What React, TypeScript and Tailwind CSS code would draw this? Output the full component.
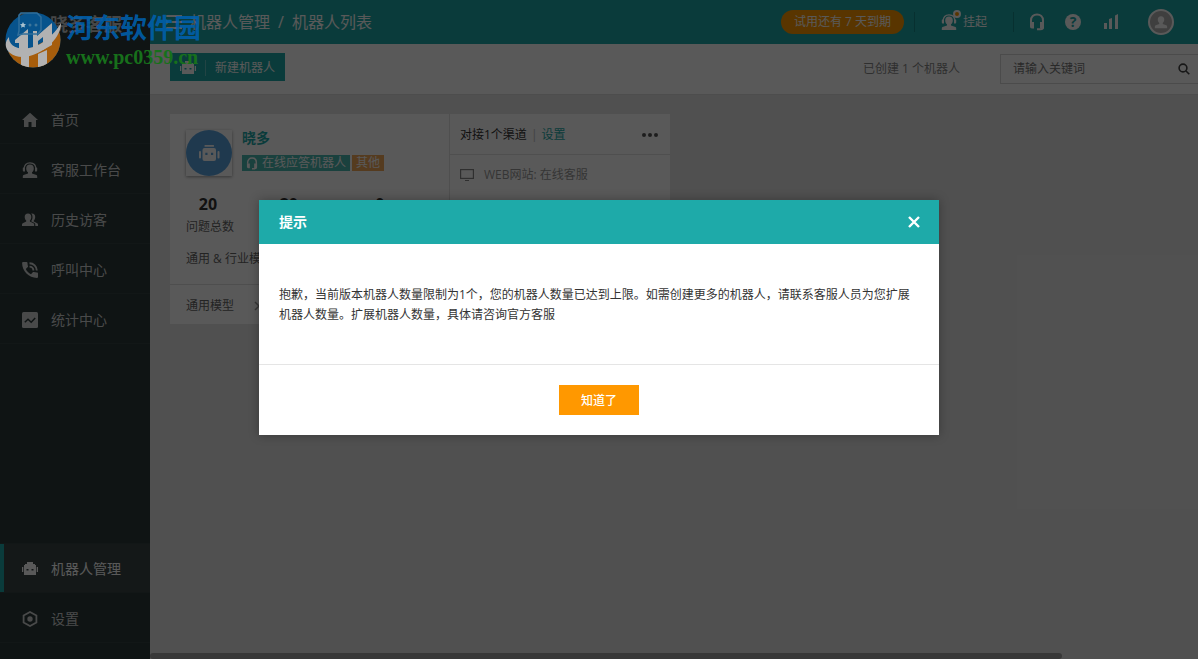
import { useState } from "react";
import type { ReactNode } from "react";

type IconProps = {
  className?: string;
};

type NavItemProps = {
  icon: ReactNode;
  label: string;
  active?: boolean;
};

const RobotIcon = ({ className }: IconProps) => (
  <svg viewBox="0 0 16 16" fill="currentColor" className={className} aria-hidden="true">
    <path fillRule="evenodd" d="M5 1h6v2h2v1h1v10H2V4h1V3h2V1Zm-.5 7v1.600h2V8h-2Zm5 0v1.600h2V8h-2Z" />
    <rect x="0" y="6" width="1.300" height="5" />
    <rect x="14.700" y="6" width="1.300" height="5" />
  </svg>
);

const RobotFace = ({ className }: IconProps) => (
  <svg viewBox="0 0 22 18" fill="currentColor" className={className} aria-hidden="true">
    <rect x="6.500" y="1" width="9.500" height="1.800" rx=".6" />
    <path fillRule="evenodd" d="M6.500 4h9.500a2 2 0 0 1 2 2v9a2 2 0 0 1-2 2H6.500a2 2 0 0 1-2-2V6a2 2 0 0 1 2-2Zm.8 4.800v2.200h2.200V8.800H7.300Zm5.700 0v2.200h2.200V8.800H13Z" />
    <rect x="1" y="7" width="2" height="7.500" rx="1" />
    <rect x="19.500" y="7" width="2" height="7.500" rx="1" />
  </svg>
);

const HomeIcon = ({ className }: IconProps) => (
  <svg viewBox="0 0 16 16" fill="currentColor" className={className} aria-hidden="true">
    <path d="M8 .8 16 8h-2v7H9.500v-5h-3v5H2V8H0L8 .8Z" />
  </svg>
);

const AgentIcon = ({ className }: IconProps) => (
  <svg viewBox="0 0 16 16" className={className} aria-hidden="true">
    <path d="M2 7.500C2 3 4.500.8 8 .8s6 2.200 6 6.700" fill="none" stroke="currentColor" strokeWidth="1.300" />
    <path
      fill="currentColor"
      d="M8 2.600c2.500 0 3.800 1.600 3.800 3.800 0 1.700-.7 3-1.800 3.900v1.100l4.500 1.700c.5.300.7.700.7 1.300V16H.8v-1.600c0-.6.2-1 .7-1.300L6 11.400v-1.100c-1.100-.9-1.800-2.200-1.800-3.900C4.200 4.200 5.500 2.600 8 2.600ZM1.200 5.500H3v4H2c-.8 0-1.200-.5-1.200-1.300V6l.4-.5Zm13.600 0H13v4h1c.8 0 1.200-.5 1.200-1.300V6l-.4-.5Z"
    />
  </svg>
);

const VisitorsIcon = ({ className }: IconProps) => (
  <svg viewBox="0 0 16 16" fill="currentColor" className={className} aria-hidden="true">
    <path d="M6 1.500c2.200 0 3.300 1.500 3.300 3.500 0 1.600-.6 2.800-1.400 3.600v1l3.500 1.700c.6.300.8.800.8 1.300V14H0v-1.400c0-.5.200-1 .8-1.300l3.400-1.700v-1C3.300 7.800 2.700 6.600 2.700 5c0-2 1.100-3.500 3.300-3.500Z" />
    <path d="M9.200 1.600c2.600-.4 4 1.200 4 3.400 0 1.600-.6 2.800-1.400 3.600v1l3.400 1.700c.5.300.8.800.8 1.300V14h-2.700v-1.400c0-.8-.4-1.500-1.200-1.900L9.400 9.400v-.6c.6-.9 1.100-2.200 1.100-3.800 0-1.400-.4-2.600-1.300-3.400Z" />
  </svg>
);

const CallIcon = ({ className }: IconProps) => (
  <svg viewBox="0 0 16 16" className={className} aria-hidden="true">
    <path
      fill="currentColor"
      d="M3.800 7C5 9.400 6.600 11 9 12.200l1.800-1.900c.3-.3.600-.4 1-.2 1 .3 2 .5 3.200.5.600 0 1 .4 1 1V15c0 .5-.4.900-1 .9C6.800 15.900.1 9.200.1 1c0-.5.400-.9.900-.9h3.600c.6 0 .9.400.9.900 0 1.100.200 2.200.5 3.200.1.300 0 .7-.2.900L3.800 7Z"
    />
    <path d="M7.500 1.200c4 0 7.300 3.300 7.300 7.300M7.500 4.600c2.200 0 3.900 1.700 3.900 3.900" fill="none" stroke="currentColor" strokeWidth="1.900" />
  </svg>
);

const StatsIcon = ({ className }: IconProps) => (
  <svg viewBox="0 0 16 16" className={className} aria-hidden="true">
    <rect width="16" height="16" rx="1.500" fill="currentColor" />
    <path d="m2.800 10.200 3.200-3 3.200 3 4-4.200" fill="none" stroke="#2b3939" strokeWidth="1.500" />
  </svg>
);

const HexIcon = ({ className }: IconProps) => (
  <svg viewBox="0 0 16 16" className={className} aria-hidden="true">
    <path d="M8 1 14.400 4.500v7L8 15l-6.400-3.500v-7L8 1Z" fill="none" stroke="currentColor" strokeWidth="1.800" />
    <circle cx="8" cy="8" r="2.700" fill="currentColor" />
  </svg>
);

const HeadsetIcon = ({ className }: IconProps) => (
  <svg viewBox="0 0 16 18" className={className} aria-hidden="true">
    <path d="M2 9.500V7.500c0-3.800 2.600-6 6-6s6 2.200 6 6V14c0 1.700-1 2.300-2.500 2.300H8" fill="none" stroke="currentColor" strokeWidth="2" />
    <path d="M1 9h4v6.500H3c-1.300 0-2-.8-2-2V9Zm10 0h4v6.500h-4V9Z" fill="currentColor" />
  </svg>
);

const PersonIcon = ({ className }: IconProps) => (
  <svg viewBox="0 0 16 16" fill="currentColor" className={className} aria-hidden="true">
    <path d="M8 1.500c2.500 0 3.700 1.500 3.700 3.700 0 1.700-.7 3-1.700 3.900v1.200l4 1.500c.7.300 1 .7 1 1.400V15H1v-1.800c0-.7.300-1.100 1-1.400l4-1.500V9.100c-1-.9-1.700-2.200-1.700-3.900C4.300 3 5.500 1.500 8 1.500Z" />
  </svg>
);

const NavItem = ({ icon, label, active }: NavItemProps) => (
  <li className="border-b border-[#354343]">
    <a
      href="#"
      className={
        active
          ? "flex h-12 items-center gap-[13px] border-l-4 border-[#1eaaa9] bg-[#3a4646] pt-[2px] pl-[18px] text-sm text-white"
          : "flex h-12 items-center gap-[13px] pt-[2px] pl-[22px] text-sm text-[#d0d3d3]"
      }
    >
      {icon}
      <span>{label}</span>
    </a>
  </li>
);

const Sidebar = () => (
  <aside className="flex w-[150px] shrink-0 flex-col bg-[#2b3939]">
    <div className="flex h-[95px] items-start gap-2 border-b border-[#354343] pt-3 pl-[15px] text-[#c8cccc]">
      <svg viewBox="0 0 27 24" className="h-6 w-[27px]" fill="none" stroke="currentColor" strokeWidth="1.500" aria-hidden="true">
        <path d="M6 2h15l4 4v13l-3 3H7l-4 1 1-4V4l2-2Z" />
        <circle cx="8" cy="12" r="1.500" fill="currentColor" />
        <circle cx="14" cy="12" r="1" fill="currentColor" />
        <circle cx="20" cy="12" r="1" fill="currentColor" />
      </svg>
      <strong className="text-lg leading-6">晓多客服</strong>
    </div>
    <nav className="flex flex-1 flex-col justify-between pb-4">
      <ul className="space-y-px">
        <NavItem icon={<HomeIcon className="size-4" />} label="首页" />
        <NavItem icon={<AgentIcon className="size-4" />} label="客服工作台" />
        <NavItem icon={<VisitorsIcon className="size-4" />} label="历史访客" />
        <NavItem icon={<CallIcon className="size-4" />} label="呼叫中心" />
        <NavItem icon={<StatsIcon className="size-4" />} label="统计中心" />
      </ul>
      <ul className="space-y-px border-t border-[#354343]">
        <NavItem icon={<RobotIcon className="size-4" />} label="机器人管理" active />
        <NavItem icon={<HexIcon className="size-4" />} label="设置" />
      </ul>
    </nav>
  </aside>
);

const Header = () => (
  <header className="flex h-11 shrink-0 items-center bg-[#1eaaa9] pr-6 pl-4 text-white">
    <button type="button" aria-label="菜单">
      <svg viewBox="0 0 16 14" className="h-[14px] w-4" fill="currentColor" aria-hidden="true">
        <path d="M0 0h16v2H0zM5 6h11v2H5zM0 12h16v2H0zM0 4l3 3-3 3z" />
      </svg>
    </button>
    <div className="ml-2 flex gap-2 text-base">
      <span>机器人管理</span>
      <span>/</span>
      <span>机器人列表</span>
    </div>
    <div className="ml-auto flex items-center">
      <span className="rounded-full bg-[#ff9800] px-[13px] text-xs leading-6">试用还有 7 天到期</span>
      <span className="ml-[10px] h-5 w-px bg-[#168b8a]" />
      <button type="button" className="ml-[26px] flex items-center gap-[6px] text-xs">
        <span className="relative">
          <AgentIcon className="size-4" />
          <span className="absolute -top-1 -right-1 size-2 rounded-full border-2 border-white bg-[#ff9800]" />
        </span>
        挂起
      </button>
      <span className="ml-[26px] h-5 w-px bg-[#168b8a]" />
      <button type="button" className="ml-[15px]" aria-label="客服">
        <HeadsetIcon className="h-[18px] w-4" />
      </button>
      <button type="button" className="ml-5 size-4 rounded-full bg-white text-center text-sm leading-4 font-bold text-[#1eaaa9]">
        ?
      </button>
      <button type="button" className="ml-[23px]" aria-label="统计">
        <svg viewBox="0 0 14 16" className="h-4 w-[14px]" fill="currentColor" aria-hidden="true">
          <path d="M0 9h3v6H0zM5 5l3-1v11H5zM11 1.500 14 0v15h-3z" />
        </svg>
      </button>
      <button
        type="button"
        className="ml-[30px] flex size-[26px] items-center justify-center rounded-full border-2 border-white bg-[#b5b5b5]"
        aria-label="账号"
      >
        <PersonIcon className="size-[14px]" />
      </button>
    </div>
  </header>
);

const Toolbar = () => (
  <div className="flex h-[51px] shrink-0 items-center border-b border-[#dcdcdc] bg-white pl-5 text-xs text-[#888]">
    <button type="button" className="mb-1 flex h-7 items-center bg-[#1eaaa9] px-[10px] pt-px text-white">
      <RobotIcon className="size-4" />
      <span className="mx-[9px] h-4 w-px bg-[#62c4c3]" />
      新建机器人
    </button>
    <span className="ml-auto">已创建 1 个机器人</span>
    <label className="ml-10 flex h-[30px] w-[198px] items-center border border-r-0 border-[#d8d8d8] pr-2 pl-3">
      <input
        type="text"
        placeholder="请输入关键词"
        aria-label="请输入关键词"
        className="min-w-0 flex-1 outline-none placeholder:text-[#777]"
      />
      <svg viewBox="0 0 12 12" className="size-3" fill="none" stroke="#444" strokeWidth="1.600" aria-hidden="true">
        <circle cx="5" cy="5" r="3.900" />
        <path d="m8 8 3.300 3.300" />
      </svg>
    </label>
  </div>
);

const RobotCard = () => (
  <article className="flex h-[210px] w-[500px] bg-white text-xs text-[#666]">
    <div className="flex w-[280px] flex-col border-r border-[#e3e3e3]">
      <div className="flex gap-[10px] px-4 pt-4">
        <div className="size-[46px] shadow-[0_1px_3px_rgba(0,0,0,0.4)]">
          <div className="flex size-full items-center justify-center rounded-full bg-[#5ba4e0] text-white">
            <RobotFace className="h-[18px] w-[22px]" />
          </div>
        </div>
        <div>
          <h2 className="text-sm leading-4 font-bold text-[#1eaaa9]">晓多</h2>
          <div className="mt-[9px] flex gap-[2px] leading-4 text-white">
            <span className="flex items-center gap-1 bg-[#4cb9b1] px-1">
              <HeadsetIcon className="h-[13px] w-3" />
              在线应答机器人
            </span>
            <span className="bg-[#f3a95b] px-1">其他</span>
          </div>
        </div>
      </div>
      <dl className="mt-[18px] grid grid-cols-3 pl-4">
        <div className="flex w-12 flex-col-reverse items-center gap-[3px]">
          <dt className="leading-5 whitespace-nowrap">问题总数</dt>
          <dd className="mr-1 text-base leading-5 font-bold text-[#333]">20</dd>
        </div>
        <dd className="ml-[6px] text-base leading-5 font-bold text-[#333]">20</dd>
        <dd className="ml-[14px] text-base leading-5 font-bold text-[#333]">0</dd>
      </dl>
      <p className="mt-3 px-4 leading-5">通用 &amp; 行业模型</p>
      <div className="mt-auto flex h-10 items-center gap-5 border-t border-[#dedede] px-4 pt-[2px]">
        <span>通用模型</span>
        <svg viewBox="0 0 6 10" className="h-[10px] w-[6px]" fill="none" stroke="#999" strokeWidth="1.500" aria-hidden="true">
          <path d="m1 1 4 4-4 4" />
        </svg>
      </div>
    </div>
    <div className="flex-1">
      <div className="flex h-[41px] items-center border-b border-[#e3e3e3] px-[10px] pt-px text-[#333]">
        <span>对接1个渠道</span>
        <span className="mx-1 text-[#bbb]">|</span>
        <a href="#" className="text-[#1eaaa9]">设置</a>
        <button type="button" className="ml-auto flex gap-[2px] px-[2px]" aria-label="更多">
          <span className="size-1 rounded-full bg-[#555]" />
          <span className="size-1 rounded-full bg-[#555]" />
          <span className="size-1 rounded-full bg-[#555]" />
        </button>
      </div>
      <div className="flex h-10 items-center gap-[10px] px-[10px] text-[#999]">
        <svg viewBox="0 0 14 12" className="h-3 w-[14px]" aria-hidden="true">
          <rect x=".6" y=".6" width="12.800" height="8.800" fill="none" stroke="#888" strokeWidth="1.200" />
          <path d="M5 11h4v1H5z" fill="#888" />
        </svg>
        <span>WEB网站: 在线客服</span>
      </div>
    </div>
  </article>
);

const SiteMark = () => (
  <div className="pointer-events-none absolute top-2 left-1 flex items-center gap-1">
    <svg viewBox="0 0 58 60" className="h-[60px] w-[58px]" aria-hidden="true">
      <defs>
        <clipPath id="disc">
          <circle cx="29" cy="31" r="27.500" />
        </clipPath>
      </defs>
      <g clipPath="url(#disc)">
        <rect width="58" height="60" fill="#07538c" />
        <path d="M0 42c19 3 40-5 58-26v44H0V42Z" fill="#a65d0c" />
        <path d="m11 31 13-11v21h-9v-7h-4zM29 22h4v5l15-13v22l-9 5V28l-5 4v10h-5z" fill="#b2b2b2" />
        <path d="M17 46h8v14h-8zM34 45l9-4v19h-9z" fill="#b2b2b2" />
      </g>
      <path d="M5 28C4 44 37 47 57 14 57 36 22 57 6 44 0 39 1 32 5 28Z" fill="#b2b2b2" />
      <path d="M17 4h16l4 4v13l-3 4H19l-5 1 1-4V6l2-2Z" fill="none" stroke="#316f9b" strokeWidth="1.500" />
      <path d="m19 13 1 2 2 .3-1.500 1.300.4 2L19 17.700l-1.900 1 .4-2-1.500-1.400 2-.3 1-2Z" fill="#a8c1cf" />
      <circle cx="26" cy="16" r="1.500" fill="#3e769b" />
      <circle cx="32" cy="16" r="1.500" fill="#3e769b" />
    </svg>
    <div className="pt-[5px] font-['Liberation_Serif','Noto_Sans_CJK_SC',serif] font-bold">
      <div className="text-[27px] leading-8 text-[#0060ae]/90">河东软件园</div>
      <div className="text-xl leading-6 text-[#17701b]">www.pc0359.cn</div>
    </div>
  </div>
);

type NoticeProps = {
  onClose: () => void;
};

const NoticeDialog = ({ onClose }: NoticeProps) => (
  <div className="absolute inset-0 flex items-start justify-center bg-black/65 px-4 pt-[200px]">
    <section
      role="dialog"
      aria-modal="true"
      aria-labelledby="notice-title"
      className="w-full max-w-[680px] bg-white text-xs text-[#333] shadow-[0_0_10px_rgba(0,0,0,0.3)]"
    >
      <header className="flex h-11 items-center justify-between bg-[#1eaaa9] pr-[19px] pl-5 text-white">
        <h1 id="notice-title" className="text-sm font-bold">提示</h1>
        <button type="button" onClick={onClose} aria-label="关闭">
          <svg viewBox="0 0 12 12" className="size-3" fill="none" stroke="currentColor" strokeWidth="2.400" aria-hidden="true">
            <path d="m1 1 10 10M11 1 1 11" />
          </svg>
        </button>
      </header>
      <p className="min-h-[120px] px-5 pt-[41px] pb-5 leading-5">
        抱歉，当前版本机器人数量限制为1个，您的机器人数量已达到上限。如需创建更多的机器人，请联系客服人员为您扩展机器人数量。扩展机器人数量，具体请咨询官方客服
      </p>
      <footer className="flex justify-center border-t border-[#e5e5e5] py-5">
        <button type="button" onClick={onClose} className="h-[30px] w-20 bg-[#ff9800] pt-px font-medium text-white">
          知道了
        </button>
      </footer>
    </section>
  </div>
);

const App = () => {
  const [open, setOpen] = useState(true);

  return (
    <div className="relative flex h-screen overflow-hidden bg-[#e6e6e6] font-['Open_Sans','Noto_Sans_CJK_SC',sans-serif]">
      <Sidebar />
      <div className="flex min-w-0 flex-1 flex-col">
        <Header />
        <Toolbar />
        <main className="flex-1 px-5 pt-[19px]">
          <RobotCard />
        </main>
        <div className="h-[6px] w-[87%] rounded-full bg-[#a0a0a0]" />
      </div>
      {open && <NoticeDialog onClose={() => setOpen(false)} />}
      <SiteMark />
    </div>
  );
};

export default App;
